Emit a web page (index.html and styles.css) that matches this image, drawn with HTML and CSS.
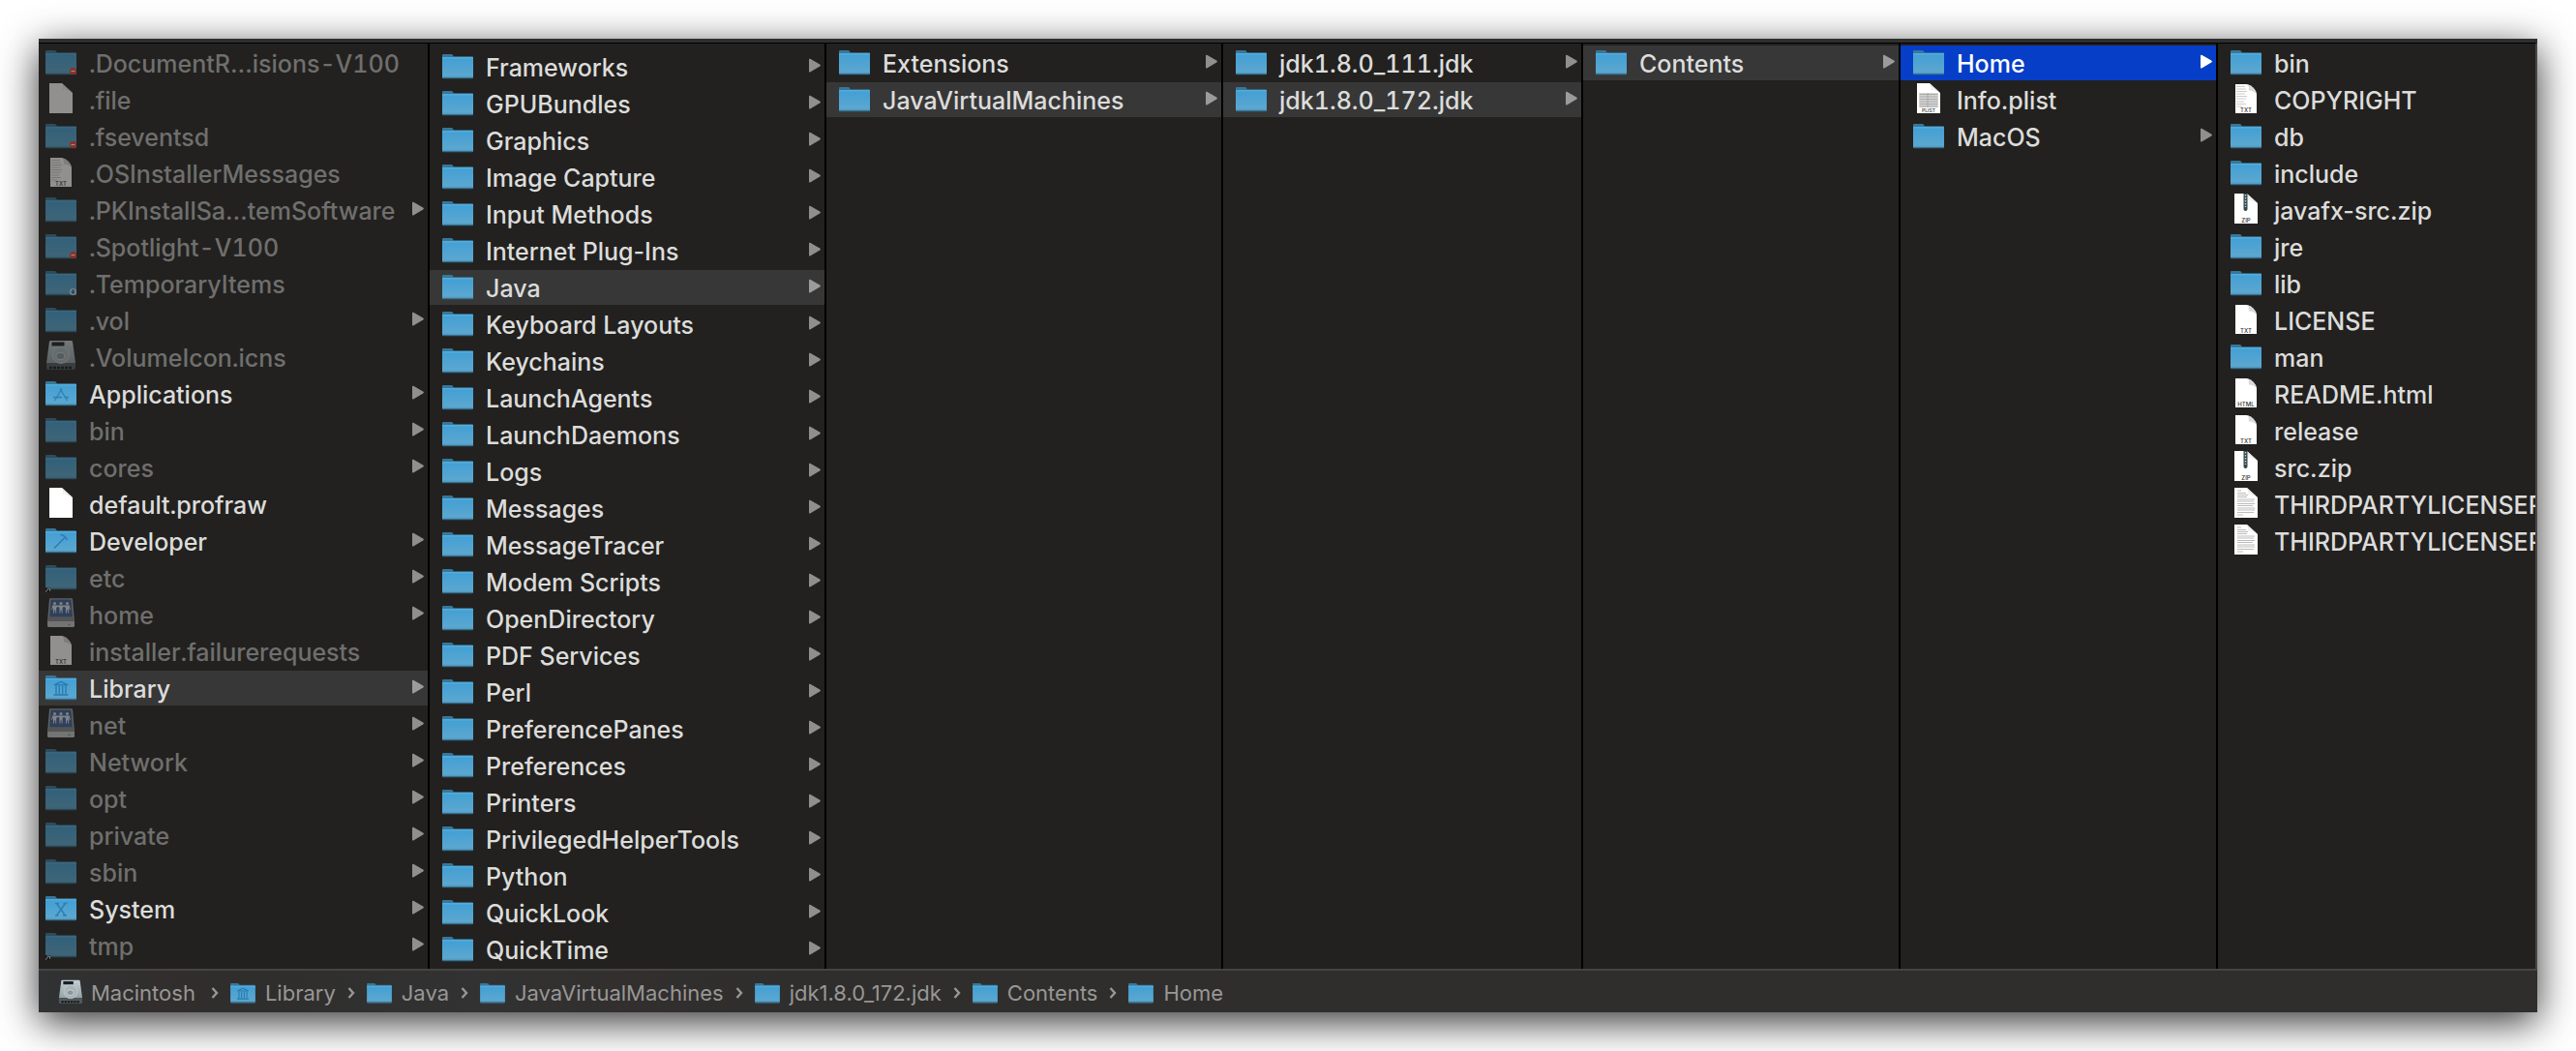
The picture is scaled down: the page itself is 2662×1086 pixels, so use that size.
FILE: index.html
```html
<!DOCTYPE html>
<html lang="en">
<head>
<meta charset="utf-8">
<title>Home</title>
<link rel="stylesheet" href="styles.css">
</head>
<body>
<svg class="gradients" aria-hidden="true">
  <linearGradient id="blue" x1="0" y1="0" x2="0" y2="1">
    <stop offset="0" stop-color="#419fd4"/><stop offset=".85" stop-color="#5ba7d0"/><stop offset="1" stop-color="#4c93b9"/>
  </linearGradient>
  <linearGradient id="metal" x1="0" y1="0" x2="0" y2="1">
    <stop offset="0" stop-color="#c3cfd3"/><stop offset="1" stop-color="#96a1a5"/>
  </linearGradient>
</svg>
<svg class="sprite" aria-hidden="true">
  <symbol id="folder" viewBox="0 0 32 36">
    <path fill="#36789a" d="M0 8V6q0-1 1-1h8.500q1 0 1.500 1l.8 1.200H31q1 0 1 1V12H0z"/>
    <rect y="8" width="32" height="22" rx="1" fill="url(#blue)"/>
    <rect y="8.500" width="32" height=".8" fill="#69b6df"/>
    <path fill="#346f8e" d="M0 29h32q0 1.300-1 1.300H1q-1 0-1-1.300z"/>
  </symbol>
  <symbol id="folder-no" viewBox="0 0 32 36">
    <use href="#folder" width="32" height="36"/>
    <circle cx="28.500" cy="26.500" r="3.500" fill="#ff3a2a"/><path stroke="#fff" stroke-width="1.200" d="M26.500 26.500h4"/>
  </symbol>
  <symbol id="folder-drop" viewBox="0 0 32 36">
    <use href="#folder" width="32" height="36"/>
    <circle cx="28.500" cy="26.500" r="3.600" fill="#d8e2ea"/><path fill="#1f6fc0" d="M27.500 24h2v2.200h1.600l-2.600 3-2.600-3h1.600z"/>
  </symbol>
  <symbol id="folder-alias" viewBox="0 0 32 36">
    <use href="#folder" width="32" height="36"/>
    <path fill="#0c0c0c" d="M0 28h5v5H0z"/><path fill="none" stroke="#d6d6d6" stroke-width="1" d="M.5 33q0-2.500 3-3.500M1.500 29h3v3"/>
  </symbol>
  <symbol id="folder-apps" viewBox="0 0 32 36">
    <use href="#folder" width="32" height="36"/>
    <path fill="none" stroke="#2e7fb5" stroke-width="1.300" d="M15 12.500l7.500 12.500M17 12.500L9.500 25M8 21.500h9M19.500 21.500H24"/>
  </symbol>
  <symbol id="folder-dev" viewBox="0 0 32 36">
    <use href="#folder" width="32" height="36"/>
    <path fill="none" stroke="#2e7fb5" stroke-width="1.700" d="M9 25.500L20 14.500M15.500 11.500q4.500.5 7 5.500"/>
  </symbol>
  <symbol id="folder-library" viewBox="0 0 32 36">
    <use href="#folder" width="32" height="36"/>
    <path fill="none" stroke="#2778b0" stroke-width="1.300" d="M9 14.800L16 11.500l7 3.300zM11 16v8M14.300 16v8M17.700 16v8M21 16v8M8.500 25h15"/>
  </symbol>
  <symbol id="folder-system" viewBox="0 0 32 36">
    <use href="#folder" width="32" height="36"/>
    <path fill="none" stroke="#2e7fb5" stroke-width="1.500" d="M11.500 12.500l9 12.500M20.500 12.500l-9 12.500M10 12.500h4M18.500 12.500h4M10 25h3.500M18 25h4"/>
  </symbol>
  <symbol id="page" viewBox="0 0 32 36">
    <path fill="#fff" d="M4 1h13l11 10v21H4z"/><path fill="#dcdcdc" d="M17 1q2 3 1.500 7 6-.5 9.500 3z"/><path fill="#f4f4f4" d="M18.500 3.500V8h5z"/>
  </symbol>
  <symbol id="page-plain" viewBox="0 0 32 36">
    <path fill="#fff" d="M5 2h12q8 2.500 10 10v20H5z"/><path fill="#d9d9d9" d="M18 2.300q1.500 3 .8 6.200 4.700-.2 8.200 3.500-2-7-9-9.700z"/>
  </symbol>
  <symbol id="page-txt" viewBox="0 0 32 36">
    <use href="#page-plain" width="32" height="36"/>
    <text x="16" y="31" class="tag">TXT</text>
  </symbol>
  <symbol id="page-txt-lines" viewBox="0 0 32 36">
    <use href="#page-plain" width="32" height="36"/>
    <path fill="none" stroke="#ccc" stroke-width="1" d="M6 4.500h9M6 7h10M6 9.500h11M6 12h9M6 14.500h11M6 17h10M6 20h8M6 22.500h10M6 25h6"/>
    <text x="16" y="31" class="tag">TXT</text>
  </symbol>
  <symbol id="page-html" viewBox="0 0 32 36">
    <use href="#page-plain" width="32" height="36"/>
    <text x="16" y="31" class="tag">HTML</text>
  </symbol>
  <symbol id="page-plist" viewBox="0 0 32 36">
    <use href="#page" width="32" height="36"/>
    <path fill="#d4d4d4" d="M6 11h20v15H6z"/><path fill="none" stroke="#a2a2a2" stroke-width=".8" d="M7 12.500h18M7 15h18M7 17.500h18M7 20h18M7 22.500h18M7 25h18M15 11v15"/>
    <text x="16" y="31" class="tag tag-small">PLIST</text>
  </symbol>
  <symbol id="page-zip" viewBox="0 0 32 36">
    <use href="#page" width="32" height="36"/>
    <path fill="#33474b" d="M13.500 1h4v16q0 2-2 2t-2-2z"/><path stroke="#b9cdd0" stroke-width="1.500" stroke-dasharray="1.500 1.500" d="M15.500 2v13"/>
    <text x="16" y="31" class="tag">ZIP</text>
  </symbol>
  <symbol id="page-text" viewBox="0 0 32 36">
    <use href="#page" width="32" height="36"/>
    <path fill="none" stroke="#b4b4b4" stroke-width=".9" d="M7 4h4M7 6.500h9M7 8.500h11M7 10.500h10M7 13h18M7 15h17M7 17.500h18M7 19.500h16M7 22h18M7 24h18M7 26.500h17M7 29h6"/>
  </symbol>
  <symbol id="disk" viewBox="0 0 32 36">
    <path fill="url(#metal)" d="M4 2q.2-1 1.200-1h21.600q1 0 1.200 1l3 22H1z"/>
    <path fill="#50595c" d="M1 24h30v5q0 2-2 2H3q-2 0-2-2z"/>
    <path fill="none" stroke="#15181a" stroke-width="2.500" stroke-dasharray="3 1" d="M4 29h24"/>
    <path fill="#1b1f21" d="M6.500 2.500h13v4h-13z"/>
    <circle cx="16" cy="16" r="8.500" fill="#a9b4b8" stroke="#c9d3d6" stroke-width=".8"/>
    <ellipse cx="15.500" cy="17" rx="4.500" ry="3.500" fill="#8b979b" stroke="#dce3e5" stroke-width=".8"/>
  </symbol>
  <symbol id="server" viewBox="0 0 32 36">
    <path fill="#9aa2a6" d="M4 2q.2-.8 1-.8h22q.8 0 1 .8l2 24H2z"/>
    <path fill="#3c5f96" d="M5.500 2.500h21l1.500 18H4z"/>
    <path fill="#c3c6c8" d="M2 25h28v4.500q0 1.500-1.500 1.500h-25Q2 31 2 29.500z"/>
    <path fill="#888" d="M2.500 21h27l.5 4H2z"/>
    <g fill="#dfe6ee"><circle cx="9.500" cy="6.500" r="1.500"/><circle cx="16" cy="6.500" r="1.500"/><circle cx="22.500" cy="6.500" r="1.500"/>
    <path d="M7 8.500h18v1.500l1 2.500-.8.500-1-2.500v6h-1v-3h-1.200v3h-1.100V11L19 9.800 17.600 11v5.500h-1v-3h-1.200v3h-1V11L13 9.800 11.200 11v5.500h-1v-3H9v3H8v-6L6.800 13 6 12.500 7 10z"/></g>
    <circle cx="24.500" cy="28.500" r=".9" fill="#3fae74"/>
  </symbol>
  <symbol id="arrow" viewBox="0 0 12 36">
    <path fill="currentColor" d="M0 10.500q0-1.200 1.200-.7L11.200 15.600q1.300.9 0 1.800L1.200 23.400Q0 24 0 22.600z"/>
  </symbol>
  <symbol id="chevron" viewBox="0 0 8 12">
    <path fill="none" stroke="currentColor" stroke-width="2.400" d="M1.500 1l4.500 5-4.500 5"/>
  </symbol>
</svg>

<main class="window">
  <div class="browser">
    <ul class="column column-root">
      <li><a class="row dim" href="#"><svg class="icon"><use href="#folder-no"/></svg><span class="name">.DocumentR…isions-V100</span></a></li>
      <li><a class="row dim" href="#"><svg class="icon"><use href="#page"/></svg><span class="name">.file</span></a></li>
      <li><a class="row dim" href="#"><svg class="icon"><use href="#folder-no"/></svg><span class="name">.fseventsd</span></a></li>
      <li><a class="row dim" href="#"><svg class="icon"><use href="#page-txt-lines"/></svg><span class="name">.OSInstallerMessages</span></a></li>
      <li><a class="row dim" href="#"><svg class="icon"><use href="#folder"/></svg><span class="name">.PKInstallSa…temSoftware</span><svg class="arrow"><use href="#arrow"/></svg></a></li>
      <li><a class="row dim" href="#"><svg class="icon"><use href="#folder-no"/></svg><span class="name">.Spotlight-V100</span></a></li>
      <li><a class="row dim" href="#"><svg class="icon"><use href="#folder-drop"/></svg><span class="name">.TemporaryItems</span></a></li>
      <li><a class="row dim" href="#"><svg class="icon"><use href="#folder"/></svg><span class="name">.vol</span><svg class="arrow"><use href="#arrow"/></svg></a></li>
      <li><a class="row dim" href="#"><svg class="icon"><use href="#disk"/></svg><span class="name">.VolumeIcon.icns</span></a></li>
      <li><a class="row" href="#"><svg class="icon"><use href="#folder-apps"/></svg><span class="name">Applications</span><svg class="arrow"><use href="#arrow"/></svg></a></li>
      <li><a class="row dim" href="#"><svg class="icon"><use href="#folder"/></svg><span class="name">bin</span><svg class="arrow"><use href="#arrow"/></svg></a></li>
      <li><a class="row dim" href="#"><svg class="icon"><use href="#folder"/></svg><span class="name">cores</span><svg class="arrow"><use href="#arrow"/></svg></a></li>
      <li><a class="row" href="#"><svg class="icon"><use href="#page"/></svg><span class="name">default.profraw</span></a></li>
      <li><a class="row" href="#"><svg class="icon"><use href="#folder-dev"/></svg><span class="name">Developer</span><svg class="arrow"><use href="#arrow"/></svg></a></li>
      <li><a class="row dim" href="#"><svg class="icon"><use href="#folder-alias"/></svg><span class="name">etc</span><svg class="arrow"><use href="#arrow"/></svg></a></li>
      <li><a class="row dim" href="#"><svg class="icon"><use href="#server"/></svg><span class="name">home</span><svg class="arrow"><use href="#arrow"/></svg></a></li>
      <li><a class="row dim" href="#"><svg class="icon"><use href="#page-txt"/></svg><span class="name">installer.failurerequests</span></a></li>
      <li><a class="row open" href="#"><svg class="icon"><use href="#folder-library"/></svg><span class="name">Library</span><svg class="arrow"><use href="#arrow"/></svg></a></li>
      <li><a class="row dim" href="#"><svg class="icon"><use href="#server"/></svg><span class="name">net</span><svg class="arrow"><use href="#arrow"/></svg></a></li>
      <li><a class="row dim" href="#"><svg class="icon"><use href="#folder"/></svg><span class="name">Network</span><svg class="arrow"><use href="#arrow"/></svg></a></li>
      <li><a class="row dim" href="#"><svg class="icon"><use href="#folder"/></svg><span class="name">opt</span><svg class="arrow"><use href="#arrow"/></svg></a></li>
      <li><a class="row dim" href="#"><svg class="icon"><use href="#folder"/></svg><span class="name">private</span><svg class="arrow"><use href="#arrow"/></svg></a></li>
      <li><a class="row dim" href="#"><svg class="icon"><use href="#folder"/></svg><span class="name">sbin</span><svg class="arrow"><use href="#arrow"/></svg></a></li>
      <li><a class="row" href="#"><svg class="icon"><use href="#folder-system"/></svg><span class="name">System</span><svg class="arrow"><use href="#arrow"/></svg></a></li>
      <li><a class="row dim" href="#"><svg class="icon"><use href="#folder-alias"/></svg><span class="name">tmp</span><svg class="arrow"><use href="#arrow"/></svg></a></li>
    </ul>

    <ul class="column column-scrolled">
      <li><a class="row" href="#"><svg class="icon"><use href="#folder"/></svg><span class="name">Frameworks</span><svg class="arrow"><use href="#arrow"/></svg></a></li>
      <li><a class="row" href="#"><svg class="icon"><use href="#folder"/></svg><span class="name">GPUBundles</span><svg class="arrow"><use href="#arrow"/></svg></a></li>
      <li><a class="row" href="#"><svg class="icon"><use href="#folder"/></svg><span class="name">Graphics</span><svg class="arrow"><use href="#arrow"/></svg></a></li>
      <li><a class="row" href="#"><svg class="icon"><use href="#folder"/></svg><span class="name">Image Capture</span><svg class="arrow"><use href="#arrow"/></svg></a></li>
      <li><a class="row" href="#"><svg class="icon"><use href="#folder"/></svg><span class="name">Input Methods</span><svg class="arrow"><use href="#arrow"/></svg></a></li>
      <li><a class="row" href="#"><svg class="icon"><use href="#folder"/></svg><span class="name">Internet Plug-Ins</span><svg class="arrow"><use href="#arrow"/></svg></a></li>
      <li><a class="row open" href="#"><svg class="icon"><use href="#folder"/></svg><span class="name">Java</span><svg class="arrow"><use href="#arrow"/></svg></a></li>
      <li><a class="row" href="#"><svg class="icon"><use href="#folder"/></svg><span class="name">Keyboard Layouts</span><svg class="arrow"><use href="#arrow"/></svg></a></li>
      <li><a class="row" href="#"><svg class="icon"><use href="#folder"/></svg><span class="name">Keychains</span><svg class="arrow"><use href="#arrow"/></svg></a></li>
      <li><a class="row" href="#"><svg class="icon"><use href="#folder"/></svg><span class="name">LaunchAgents</span><svg class="arrow"><use href="#arrow"/></svg></a></li>
      <li><a class="row" href="#"><svg class="icon"><use href="#folder"/></svg><span class="name">LaunchDaemons</span><svg class="arrow"><use href="#arrow"/></svg></a></li>
      <li><a class="row" href="#"><svg class="icon"><use href="#folder"/></svg><span class="name">Logs</span><svg class="arrow"><use href="#arrow"/></svg></a></li>
      <li><a class="row" href="#"><svg class="icon"><use href="#folder"/></svg><span class="name">Messages</span><svg class="arrow"><use href="#arrow"/></svg></a></li>
      <li><a class="row" href="#"><svg class="icon"><use href="#folder"/></svg><span class="name">MessageTracer</span><svg class="arrow"><use href="#arrow"/></svg></a></li>
      <li><a class="row" href="#"><svg class="icon"><use href="#folder"/></svg><span class="name">Modem Scripts</span><svg class="arrow"><use href="#arrow"/></svg></a></li>
      <li><a class="row" href="#"><svg class="icon"><use href="#folder"/></svg><span class="name">OpenDirectory</span><svg class="arrow"><use href="#arrow"/></svg></a></li>
      <li><a class="row" href="#"><svg class="icon"><use href="#folder"/></svg><span class="name">PDF Services</span><svg class="arrow"><use href="#arrow"/></svg></a></li>
      <li><a class="row" href="#"><svg class="icon"><use href="#folder"/></svg><span class="name">Perl</span><svg class="arrow"><use href="#arrow"/></svg></a></li>
      <li><a class="row" href="#"><svg class="icon"><use href="#folder"/></svg><span class="name">PreferencePanes</span><svg class="arrow"><use href="#arrow"/></svg></a></li>
      <li><a class="row" href="#"><svg class="icon"><use href="#folder"/></svg><span class="name">Preferences</span><svg class="arrow"><use href="#arrow"/></svg></a></li>
      <li><a class="row" href="#"><svg class="icon"><use href="#folder"/></svg><span class="name">Printers</span><svg class="arrow"><use href="#arrow"/></svg></a></li>
      <li><a class="row" href="#"><svg class="icon"><use href="#folder"/></svg><span class="name">PrivilegedHelperTools</span><svg class="arrow"><use href="#arrow"/></svg></a></li>
      <li><a class="row" href="#"><svg class="icon"><use href="#folder"/></svg><span class="name">Python</span><svg class="arrow"><use href="#arrow"/></svg></a></li>
      <li><a class="row" href="#"><svg class="icon"><use href="#folder"/></svg><span class="name">QuickLook</span><svg class="arrow"><use href="#arrow"/></svg></a></li>
      <li><a class="row" href="#"><svg class="icon"><use href="#folder"/></svg><span class="name">QuickTime</span><svg class="arrow"><use href="#arrow"/></svg></a></li>
    </ul>

    <ul class="column">
      <li><a class="row" href="#"><svg class="icon"><use href="#folder"/></svg><span class="name">Extensions</span><svg class="arrow"><use href="#arrow"/></svg></a></li>
      <li><a class="row open" href="#"><svg class="icon"><use href="#folder"/></svg><span class="name">JavaVirtualMachines</span><svg class="arrow"><use href="#arrow"/></svg></a></li>
    </ul>

    <ul class="column column-versions">
      <li><a class="row" href="#"><svg class="icon"><use href="#folder"/></svg><span class="name">jdk1.8.0_111.jdk</span><svg class="arrow"><use href="#arrow"/></svg></a></li>
      <li><a class="row open" href="#"><svg class="icon"><use href="#folder"/></svg><span class="name">jdk1.8.0_172.jdk</span><svg class="arrow"><use href="#arrow"/></svg></a></li>
    </ul>

    <ul class="column">
      <li><a class="row open" href="#"><svg class="icon"><use href="#folder"/></svg><span class="name">Contents</span><svg class="arrow"><use href="#arrow"/></svg></a></li>
    </ul>

    <ul class="column">
      <li><a class="row selected" href="#" aria-current="true"><svg class="icon"><use href="#folder"/></svg><span class="name">Home</span><svg class="arrow"><use href="#arrow"/></svg></a></li>
      <li><a class="row" href="#"><svg class="icon"><use href="#page-plist"/></svg><span class="name">Info.plist</span></a></li>
      <li><a class="row" href="#"><svg class="icon"><use href="#folder"/></svg><span class="name">MacOS</span><svg class="arrow"><use href="#arrow"/></svg></a></li>
    </ul>

    <ul class="column">
      <li><a class="row" href="#"><svg class="icon"><use href="#folder"/></svg><span class="name">bin</span></a></li>
      <li><a class="row" href="#"><svg class="icon"><use href="#page-txt-lines"/></svg><span class="name">COPYRIGHT</span></a></li>
      <li><a class="row" href="#"><svg class="icon"><use href="#folder"/></svg><span class="name">db</span></a></li>
      <li><a class="row" href="#"><svg class="icon"><use href="#folder"/></svg><span class="name">include</span></a></li>
      <li><a class="row" href="#"><svg class="icon"><use href="#page-zip"/></svg><span class="name">javafx-src.zip</span></a></li>
      <li><a class="row" href="#"><svg class="icon"><use href="#folder"/></svg><span class="name">jre</span></a></li>
      <li><a class="row" href="#"><svg class="icon"><use href="#folder"/></svg><span class="name">lib</span></a></li>
      <li><a class="row" href="#"><svg class="icon"><use href="#page-txt"/></svg><span class="name">LICENSE</span></a></li>
      <li><a class="row" href="#"><svg class="icon"><use href="#folder"/></svg><span class="name">man</span></a></li>
      <li><a class="row" href="#"><svg class="icon"><use href="#page-html"/></svg><span class="name">README.html</span></a></li>
      <li><a class="row" href="#"><svg class="icon"><use href="#page-txt"/></svg><span class="name">release</span></a></li>
      <li><a class="row" href="#"><svg class="icon"><use href="#page-zip"/></svg><span class="name">src.zip</span></a></li>
      <li><a class="row" href="#"><svg class="icon"><use href="#page-text"/></svg><span class="name">THIRDPARTYLICENSER</span></a></li>
      <li><a class="row" href="#"><svg class="icon"><use href="#page-text"/></svg><span class="name">THIRDPARTYLICENSER</span></a></li>
    </ul>
  </div>

  <nav class="path" aria-label="Path">
    <a class="crumb crumb-disk" href="#"><svg class="crumb-icon"><use href="#disk"/></svg>Macintosh</a>
    <svg class="chevron"><use href="#chevron"/></svg>
    <a class="crumb" href="#"><svg class="crumb-icon"><use href="#folder-library"/></svg>Library</a>
    <svg class="chevron"><use href="#chevron"/></svg>
    <a class="crumb" href="#"><svg class="crumb-icon"><use href="#folder"/></svg>Java</a>
    <svg class="chevron"><use href="#chevron"/></svg>
    <a class="crumb" href="#"><svg class="crumb-icon"><use href="#folder"/></svg>JavaVirtualMachines</a>
    <svg class="chevron"><use href="#chevron"/></svg>
    <a class="crumb" href="#"><svg class="crumb-icon"><use href="#folder"/></svg>jdk1.8.0_172.jdk</a>
    <svg class="chevron"><use href="#chevron"/></svg>
    <a class="crumb" href="#"><svg class="crumb-icon"><use href="#folder"/></svg>Contents</a>
    <svg class="chevron"><use href="#chevron"/></svg>
    <a class="crumb" href="#"><svg class="crumb-icon"><use href="#folder"/></svg>Home</a>
  </nav>
</main>
</body>
</html>
```

FILE: styles.css
```css
* {
  box-sizing: border-box;
}

body {
  margin: 0;
  padding: 40px;
  background: #fff;
  font-family: Inter, "Liberation Sans", sans-serif;
}

a {
  color: inherit;
  text-decoration: none;
}

.gradients {
  display: block;
  width: 0;
  height: 0;
}

.sprite {
  display: none;
}

.tag {
  fill: #333;
  font-family: Inter, sans-serif;
  font-size: 6px;
  text-anchor: middle;
}

.tag-small {
  font-size: 5px;
}

.window {
  border-top: 4px solid #2f2f30;
  background: #22211f;
  color: #dcdcdb;
  box-shadow: 0 10px 38px rgba(0, 0, 0, .8);
}

/* Column browser */
.browser {
  display: grid;
  grid-template-columns: 404fr 410fr 410fr 372fr 328fr 328fr 328fr;
  border-top: 1px solid #000;
  border-right: 2px solid #474747;
}

.column {
  display: flex;
  flex-direction: column;
  gap: 2px;
  min-width: 0;
  margin: 0;
  padding: 2px 0;
  border-right: 2px solid #000;
  list-style: none;
}

.column:last-child {
  border-right: 0;
}

.column-scrolled {
  padding-top: 6px;
}

.column-root,
.column-versions {
  font-variant-numeric: tabular-nums;
}

.row {
  display: flex;
  gap: 13px;
  height: 36px;
  padding: 0 4px 0 13px;
  overflow: hidden;
  font-size: 25px;
  font-weight: 500;
  line-height: 38px;
  white-space: nowrap;
}

.column-root .row {
  padding-left: 7px;
}

.column:last-child .row {
  padding-right: 0;
}

.icon {
  flex: none;
  width: 32px;
  height: 36px;
}

.name {
  flex: 1;
  min-width: 0;
}

.arrow {
  flex: none;
  width: 12px;
  height: 36px;
  color: #8f8f8f;
}

.dim .icon {
  opacity: .5;
}

.dim .name {
  color: #6f6f6d;
}

.open {
  background: #373737;
}

.open .arrow {
  color: #9b9b9b;
}

.selected {
  background: #063ec7;
  color: #fff;
}

.selected .arrow {
  color: #fff;
}

/* Path bar */
.path {
  display: flex;
  align-items: center;
  gap: 12px;
  padding: 7px 20px 4px;
  border-top: 2px solid #454443;
  background: linear-gradient(90deg, #303233, #312e2d 120px, #2f2e2d 240px, #323232 450px, #322f2e 600px, #2f2e2c 800px);
  color: #989796;
  font-size: 22px;
  line-height: 32px;
}

.crumb {
  display: flex;
  align-items: center;
  gap: 10px;
}

.crumb-disk {
  gap: 8px;
  margin-right: 4px;
}

.crumb-icon {
  width: 26px;
  height: 29px;
}

.chevron {
  width: 8px;
  height: 12px;
}
```
